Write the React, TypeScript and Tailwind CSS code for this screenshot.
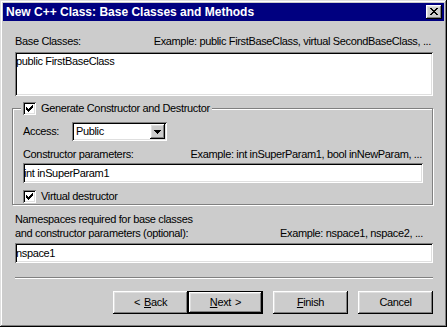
import React from 'react';

// pixel glyphs: [x, y, w] runs, 1px tall
const px = (runs: number[][]) => runs.map(([x, y, w]) => `M${x} ${y}h${w}v1h-${w}z`).join('');

const CHECK = px([[6, 0, 1], [5, 1, 2], [0, 2, 1], [4, 2, 3], [0, 3, 2], [3, 3, 3], [0, 4, 5], [1, 5, 3], [2, 6, 1]]);
const CLOSE = px([[0, 0, 2], [6, 0, 2], [1, 1, 2], [5, 1, 2], [2, 2, 4], [3, 3, 2], [2, 4, 4], [1, 5, 2], [5, 5, 2], [0, 6, 2], [6, 6, 2]]);
const ARROW = px([[0, 0, 7], [1, 1, 5], [2, 2, 3], [3, 3, 1]]);

const raised = 'bg-[#cccccc] shadow-[inset_-1px_-1px_#000,inset_1px_1px_#fff,inset_-2px_-2px_#808080,inset_2px_2px_#dfdfdf]';
const sunken = 'bg-white shadow-[inset_1px_1px_#808080,inset_-1px_-1px_#fff,inset_2px_2px_#000,inset_-2px_-2px_#dfdfdf]';

function Checkbox() {
  return (
    <div className={`w-[13px] h-[13px] shrink-0 flex items-center justify-center ${sunken}`}>
      <svg width="7" height="7" viewBox="0 0 7 7" shapeRendering="crispEdges">
        <path d={CHECK} fill="#000" />
      </svg>
    </div>
  );
}

function Field({ value, className = '' }: { value: string; className?: string }) {
  return (
    <div className={`h-[20px] flex items-center pl-[1px] ${sunken} ${className}`}>
      <span>{value}</span>
    </div>
  );
}

function Button({ children, isDefault }: { children: React.ReactNode; isDefault?: boolean }) {
  const inner = (
    <div className={`w-full h-full flex items-center justify-center ${raised}`}>{children}</div>
  );
  if (isDefault) {
    return <div className="w-[75px] h-[23px] border border-black">{inner}</div>;
  }
  return <div className="w-[75px] h-[23px]">{inner}</div>;
}

const U = ({ children }: { children: React.ReactNode }) => (
  <span className="underline decoration-1 underline-offset-[1px]">{children}</span>
);

export default function App() {
  return (
    <div
      className="w-[447px] h-[327px] bg-[#cccccc] p-[3px] flex flex-col text-black text-[11px] leading-[13px] tracking-[-0.35px] shadow-[inset_-1px_-1px_#000,inset_1px_1px_#dfdfdf,inset_-2px_-2px_#808080,inset_2px_2px_#fff]"
      style={{ fontFamily: '"Liberation Sans", Arial, sans-serif' }}
    >
      {/* Title bar */}
      <div className="h-[18px] bg-[#000080] flex items-center justify-between pl-[3px] pr-[2px]">
        <span className="text-white font-bold text-[12px] tracking-normal">New C++ Class: Base Classes and Methods</span>
        <div className={`w-[16px] h-[14px] flex items-center justify-center ${raised}`}>
          <svg width="8" height="7" viewBox="0 0 8 7" shapeRendering="crispEdges" className="-mt-[1px]">
            <path d={CLOSE} fill="#000" />
          </svg>
        </div>
      </div>

      {/* Body */}
      <div className="flex-1 flex flex-col pl-[12px] pr-[11px] pt-[14px]">
        <div className="flex justify-between h-[13px]">
          <span>Base Classes:</span>
          <span className="pr-[2px]">Example: public FirstBaseClass, virtual SecondBaseClass, ...</span>
        </div>
        <div className={`mt-[4px] h-[44px] pl-[1px] pt-[3px] ${sunken}`}>public FirstBaseClass</div>

        {/* Constructor group */}
        <div className="relative mt-[12px] -ml-[3px] border border-[#808080] shadow-[inset_1px_1px_#fff,1px_1px_#fff] pt-[13px] pl-[10px] pr-[9px] pb-[1px]">
          <div className="absolute -top-[7px] left-[8px] flex items-center gap-[5px] bg-[#cccccc] px-[2px] h-[13px]">
            <Checkbox />
            <span>Generate Constructor and Destructor</span>
          </div>

          <div className="flex items-center h-[19px]">
            <span className="w-[49px]">Access:</span>
            <div className={`w-[95px] h-[19px] flex items-center justify-between pl-[4px] pr-[2px] ${sunken}`}>
              <span>Public</span>
              <div className={`w-[15px] h-[15px] flex items-center justify-center ${raised}`}>
                <svg width="7" height="4" viewBox="0 0 7 4" shapeRendering="crispEdges">
                  <path d={ARROW} fill="#000" />
                </svg>
              </div>
            </div>
          </div>

          <div className="mt-[7px] flex justify-between h-[13px]">
            <span>Constructor parameters:</span>
            <span className="pr-[1px]">Example: int inSuperParam1, bool inNewParam, ...</span>
          </div>
          <Field value="int inSuperParam1" className="mt-[2px]" />

          <div className="mt-[7px] flex items-center gap-[5px] h-[13px]">
            <Checkbox />
            <span>Virtual destructor</span>
          </div>
        </div>

        {/* Namespaces */}
        <div className="mt-[7px] flex justify-between items-end leading-[14px]">
          <span>
            Namespaces required for base classes
            <br />
            and constructor parameters (optional):
          </span>
          <span className="pr-[10px]">Example: nspace1, nspace2, ...</span>
        </div>
        <Field value="nspace1" className="mt-[3px]" />

        <div className="mt-[14px] h-[2px] border-t border-[#808080] border-b border-b-white" />

        <div className="mt-[12px] flex justify-end">
          <Button>
            <span className="mr-[4px]">&lt;</span>
            <U>B</U>ack
          </Button>
          <Button isDefault>
            <U>N</U>ext
            <span className="ml-[4px]">&gt;</span>
          </Button>
          <div className="ml-[10px]">
            <Button>
              <U>F</U>inish
            </Button>
          </div>
          <div className="ml-[10px]">
            <Button>Cancel</Button>
          </div>
        </div>
      </div>
    </div>
  );
}
